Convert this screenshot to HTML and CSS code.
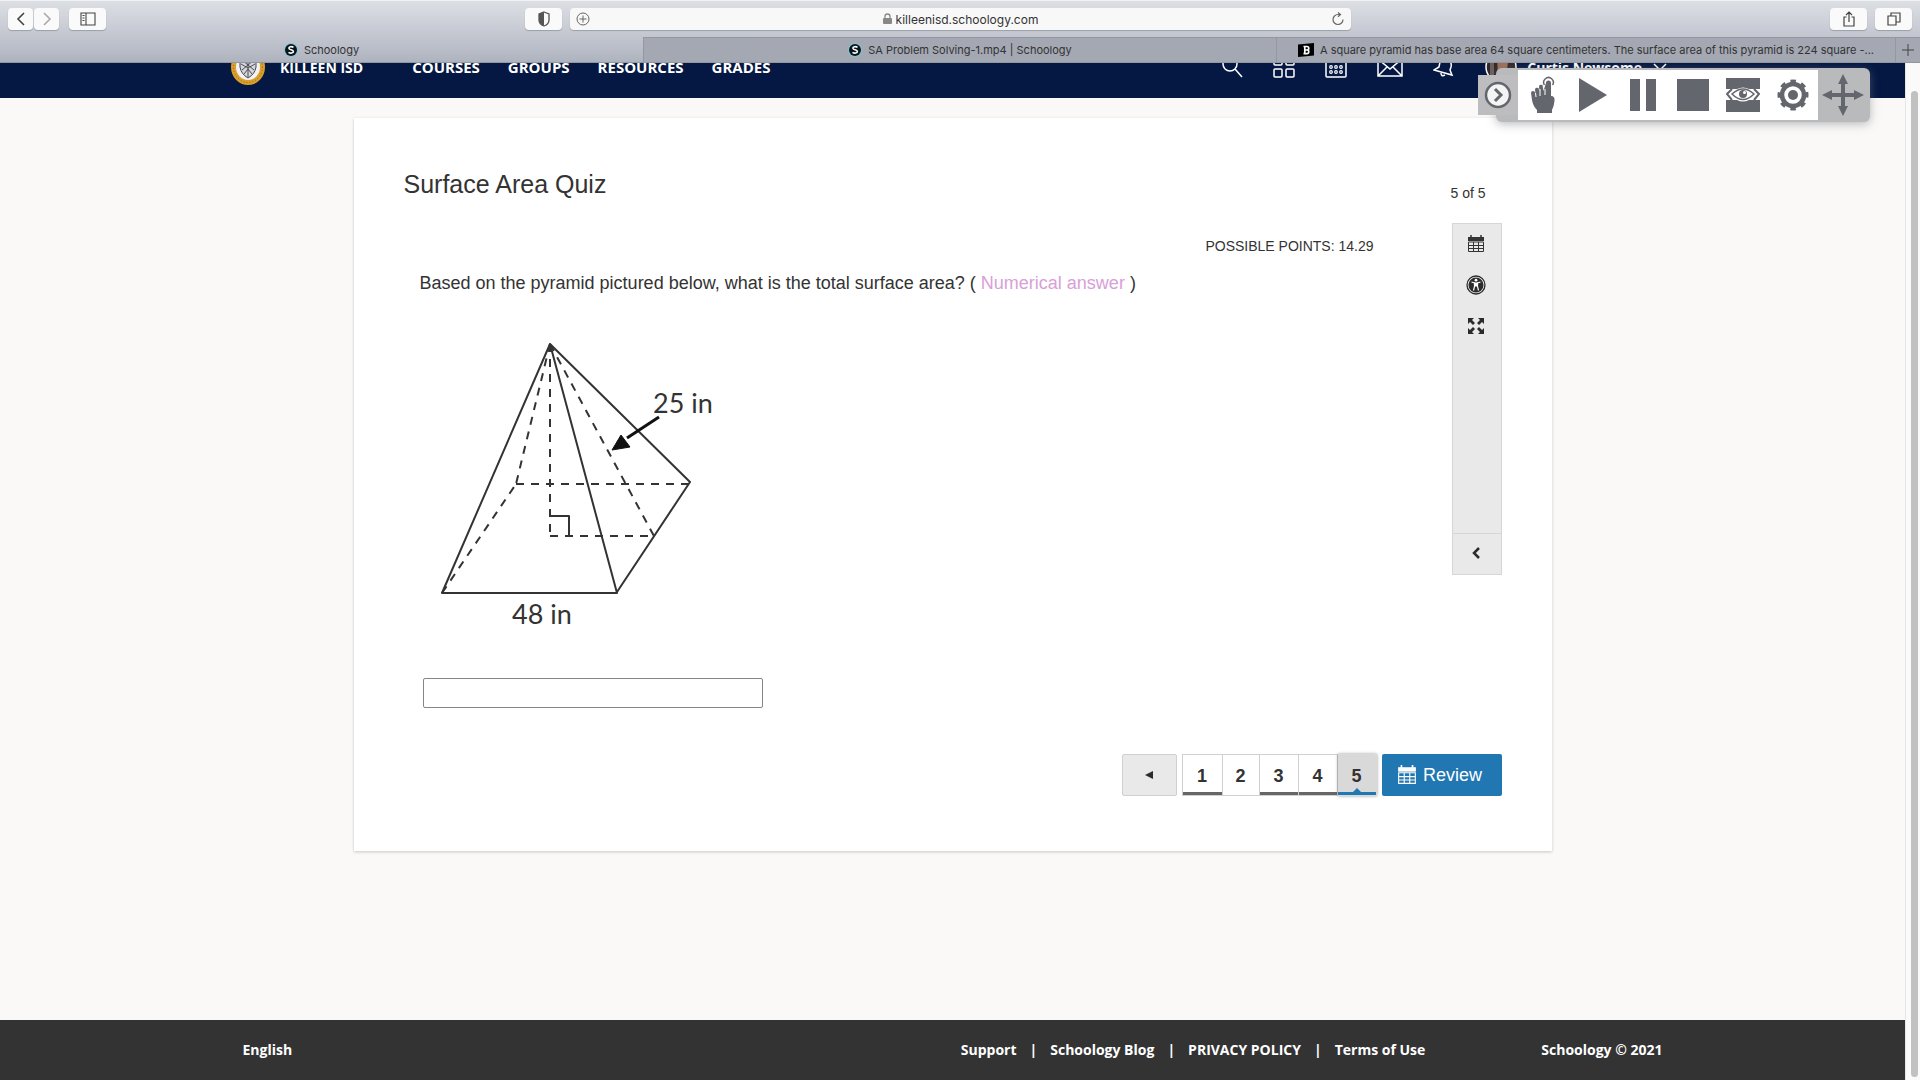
FILE: index.html
```html
<!DOCTYPE html>
<html lang="en">
<head>
    <meta charset="UTF-8">
    <meta name="viewport" content="width=device-width, initial-scale=1.0">
    <title>Surface Area Quiz | Schoology</title>
    <link rel="stylesheet" href="styles.css">
</head>
<body>

    <!-- Shared icons -->
    <svg class="icon-defs" width="0" height="0" aria-hidden="true">
        <symbol id="icon-calendar" viewBox="0 0 18 18">
            <path d="M1 2h16v4H1z" fill="currentColor"/>
            <path d="M4 0v4M14 0v4" stroke="currentColor" stroke-width="1.5"/>
            <path d="M1.5 7h15v9.5h-15zM1 10.5h16M1 13.5h16M6.5 7v10M11.5 7v10" fill="none" stroke="currentColor"/>
        </symbol>
        <symbol id="icon-schoology" viewBox="0 0 14 14">
            <circle cx="7" cy="7" r="7" fill="#7cc6dc"/>
            <circle cx="7" cy="7" r="6" fill="#0c1418"/>
            <path d="M9.5 4.3C7.6 3 4.8 3.6 4.9 5.2c.1 1.9 4.5 1.3 4.5 3.4 0 1.7-3 2-4.9.7" fill="none" stroke="#fff" stroke-width="1.6"/>
        </symbol>
    </svg>

    <div class="browser">
        <div class="toolbar">
            <div class="tool-group">
                <div class="history">
                    <button class="tool-btn small" aria-label="Back"><svg width="10" height="16" viewBox="0 0 10 16"><path d="M8 2L2 8l6 6" fill="none" stroke="#444" stroke-width="1.6"/></svg></button>
                    <button class="tool-btn small" aria-label="Forward"><svg width="10" height="16" viewBox="0 0 10 16"><path d="M2 2l6 6-6 6" fill="none" stroke="#aaa" stroke-width="1.6"/></svg></button>
                </div>
                <button class="tool-btn" aria-label="Sidebar"><svg width="16" height="14" viewBox="0 0 16 14"><path d="M1 1h14v12H1zM6 1v12M2.5 3.5h2M2.5 6h2M2.5 8.5h2" fill="none" stroke="#444" stroke-width="1.1"/></svg></button>
            </div>
            <div class="tool-group">
                <button class="tool-btn" aria-label="Privacy report"><svg width="14" height="16" viewBox="0 0 14 16"><path d="M7 1l5 2v6c0 3-2 5-5 6-3-1-5-3-5-6V3z" fill="none" stroke="#555" stroke-width="1.3"/><path d="M7 1v14c-3-1-5-3-5-6V3z" fill="#555"/></svg></button>
                <div class="address-bar">
                    <svg width="14" height="14" viewBox="0 0 14 14"><circle cx="7" cy="7" r="6" fill="none" stroke="#666"/><path d="M7 3.5v7M3.5 7h7" stroke="#666"/></svg>
                    <div class="address">
                        <svg width="9" height="12" viewBox="0 0 9 12"><rect x="0" y="5" width="9" height="6" rx="1" fill="#888"/><path d="M2 5V3.5a2.5 2.5 0 015 0V5" fill="none" stroke="#888" stroke-width="1.3"/></svg>
                        <input type="text" value="killeenisd.schoology.com" aria-label="Address">
                    </div>
                    <svg width="14" height="14" viewBox="0 0 14 14"><path d="M12 7.5A5 5 0 117 2.5h2M7 .5l2.500 2L7 4.8" fill="none" stroke="#666" stroke-width="1.2"/></svg>
                </div>
            </div>
            <div class="tool-group end">
                <button class="tool-btn" aria-label="Share"><svg width="14" height="16" viewBox="0 0 14 16"><path d="M4.5 6H2v9h10V6H9.5M7 11V1.5M4 4l3-3 3 3" fill="none" stroke="#444" stroke-width="1.2"/></svg></button>
                <button class="tool-btn" aria-label="Tabs"><svg width="14" height="14" viewBox="0 0 14 14"><path d="M1 4h8v9H1zM4 4V1h9v9H9" fill="none" stroke="#444" stroke-width="1.2"/></svg></button>
            </div>
        </div>
        <div class="tabs">
            <a href="#" class="tab active"><svg width="14" height="14"><use href="#icon-schoology"/></svg>Schoology</a>
            <a href="#" class="tab"><svg width="14" height="14"><use href="#icon-schoology"/></svg>SA Problem Solving-1.mp4 | Schoology</a>
            <a href="#" class="tab"><svg width="16" height="14" viewBox="0 0 16 14"><path d="M0 1.5L16 0v12.5L0 14z" fill="#000"/><path d="M5.5 3.5h3.5a1.7 1.7 0 010 3.5 1.8 1.8 0 010 3.6H5.5M6.8 3.5v7M6.8 7H9" fill="none" stroke="#fff" stroke-width="1.7"/></svg>A square pyramid has base area 64 square centimeters. The surface area of this pyramid is 224 square -...</a>
            <button class="new-tab" aria-label="New tab"><svg width="12" height="12" viewBox="0 0 12 12"><path d="M6 0v12M0 6h12" stroke="#444"/></svg></button>
        </div>
    </div>

    <div class="viewport">
        <div class="page">
            <header class="site-header">
                <nav class="site-nav">
                    <a href="#" class="brand">
                        <svg width="34" height="36" viewBox="0 0 34 36">
                            <ellipse cx="17" cy="18" rx="17" ry="18" fill="#d9a02c"/>
                            <ellipse cx="17" cy="18" rx="14.5" ry="15.5" fill="none" stroke="#8a661c" stroke-dasharray="1 2"/>
                            <ellipse cx="17" cy="18" rx="12" ry="13" fill="#f2f2f4"/>
                            <path d="M9 9q8-4 16 0v9q-1 7-8 11-7-4-8-11z" fill="#d5d6da" stroke="#454650"/>
                            <path d="M17 8v20M11 11l12 10M23 11L11 21M10 15l7 4 7-4M13 25l4-5 4 5" fill="none" stroke="#4c4d57"/>
                        </svg>
                        KILLEEN ISD
                    </a>
                    <div class="nav-links">
                        <a href="#">COURSES</a>
                        <a href="#">GROUPS</a>
                        <a href="#">RESOURCES</a>
                        <a href="#">GRADES</a>
                    </div>
                </nav>
                <div class="nav-tools">
                    <button aria-label="Search"><svg width="22" height="22" viewBox="0 0 22 22"><circle cx="9" cy="8" r="7"/><path d="M14 13l7 8"/></svg></button>
                    <button aria-label="Apps"><svg width="22" height="22" viewBox="0 0 22 22"><rect x="1" y="1" width="8" height="8" rx="1"/><rect x="13" y="1" width="8" height="8" rx="1"/><rect x="1" y="13" width="8" height="8" rx="1"/><rect x="13" y="13" width="8" height="8" rx="1"/></svg></button>
                    <button aria-label="Calendar"><svg width="22" height="22" viewBox="0 0 22 22"><rect x="1" y="1" width="20" height="20" rx="1"/><path d="M1 6h20"/><g stroke-width="1.2"><circle cx="6" cy="11" r="1.3"/><circle cx="11" cy="11" r="1.3"/><circle cx="16" cy="11" r="1.3"/><circle cx="6" cy="16" r="1.3"/><circle cx="11" cy="16" r="1.3"/><circle cx="16" cy="16" r="1.3"/></g></svg></button>
                    <button class="mail" aria-label="Messages"><svg width="26" height="20" viewBox="0 0 26 20"><path d="M1 1h24v18H1zM1 2l12 10L25 2M1 19l9-9M25 19l-9-9"/></svg><span class="badge"></span></button>
                    <button aria-label="Notifications"><svg width="22" height="22" viewBox="0 0 22 22"><path d="M8 3q4-2 8 1 3 3 2 7l-1 3 2 5L1 14l5-3 1-5zM8 17q0 4 4 2"/></svg></button>
                    <a href="#" class="user">
                        <svg width="32" height="32" viewBox="0 0 32 32"><circle cx="16" cy="16" r="15" fill="#33292a" stroke="#fff"/><path d="M12 6q8-3 11 5l-2 15h-8z" fill="#a0705c" stroke="none"/><path d="M7 24V12q3-8 11-8" fill="none" stroke="#6b625e" stroke-width="4"/></svg>
                        Curtis Newsome
                        <svg width="16" height="10" viewBox="0 0 16 10"><path d="M2 2l6 6 6-6"/></svg>
                    </a>
                </div>
            </header>

            <main class="quiz-card">
                <div class="quiz-head">
                    <h1>Surface Area Quiz</h1>
                    <span class="progress">5 of 5</span>
                </div>

                <div class="quiz-body">
                    <div class="question">
                        <p class="points">POSSIBLE POINTS: 14.29</p>
                        <label for="answer">Based on the pyramid pictured below, what is the total surface area? ( <span class="hint">Numerical answer</span> )</label>
                        <!-- Pyramid diagram -->
                        <svg class="pyramid" width="300" height="300" viewBox="0 0 300 300" role="img" aria-label="Square pyramid">
                            <g fill="none" stroke="#333" stroke-width="2" stroke-linejoin="round">
                                <path d="M130 8L22 257h175L130 8l140 138-73 110"/>
                                <g stroke-dasharray="8 7">
                                    <path d="M130 8L96 148"/>
                                    <path d="M22 257L96 148"/>
                                    <path d="M96 148h174"/>
                                    <path d="M130 8v192"/>
                                    <path d="M130 200h104"/>
                                    <path d="M130 8l104 192"/>
                                </g>
                                <path d="M130 180h19v20"/>
                                <path d="M239 81l-32 21" stroke="#111" stroke-width="3"/>
                            </g>
                            <path d="M192 114l9-15 9 12z" fill="#111" stroke="#111" stroke-linejoin="round"/>
                            <text x="233" y="77">25 in</text>
                            <text x="92" y="288">48 in</text>
                        </svg>
                        <input type="text" id="answer" class="answer">
                    </div>

                    <aside class="side-panel">
                        <button aria-label="Review"><svg width="18" height="18"><use href="#icon-calendar"/></svg></button>
                        <button aria-label="Accessibility"><svg width="20" height="20" viewBox="0 0 20 20"><circle cx="10" cy="10" r="9" fill="#e9e9e9" stroke="#2b2b2b" stroke-width="1.3"/><circle cx="10" cy="10" r="7.5" fill="#2b2b2b"/><circle cx="10" cy="5.2" r="1.4" fill="#fff"/><path d="M5.5 7l3 1v3.5L7.5 15.5M14.5 7l-3 1v3.5l1 4" fill="none" stroke="#fff" stroke-width="1.2"/><path d="M8 7.5h4v4H8z" fill="#fff"/></svg></button>
                        <button aria-label="Full screen"><svg width="18" height="18" viewBox="0 0 18 18"><path d="M1 1h6L5 3l3 3-2 2-3-3-2 2zM17 1v6l-2-2-3 3-2-2 3-3-2-2zM1 17v-6l2 2 3-3 2 2-3 3 2 2zM17 17h-6l2-2-3-3 2-2 3 3 2-2z" fill="#2b2b2b"/></svg></button>
                        <button class="collapse" aria-label="Collapse"><svg width="10" height="12" viewBox="0 0 10 12"><path d="M8 1L3 6l5 5" fill="none" stroke="#2b2b2b" stroke-width="2.5"/></svg></button>
                    </aside>
                </div>

                <div class="pager">
                    <button class="prev" aria-label="Previous"><svg width="8" height="8" viewBox="0 0 8 8"><path d="M8 0v8L0 4z" fill="#2b2b2b"/></svg></button>
                    <div class="numbers">
                        <button class="answered">1</button>
                        <button>2</button>
                        <button class="answered">3</button>
                        <button class="answered">4</button>
                        <button class="current">5</button>
                    </div>
                    <button class="review"><svg width="20" height="20"><use href="#icon-calendar"/></svg>Review</button>
                </div>
            </main>

            <footer class="site-footer">
                <div class="footer-inner">
                    <a href="#">English</a>
                    <div class="footer-links">
                        <a href="#">Support</a><span>|</span><a href="#">Schoology Blog</a><span>|</span><a href="#">PRIVACY POLICY</a><span>|</span><a href="#">Terms of Use</a>
                    </div>
                    <span>Schoology © 2021</span>
                </div>
            </footer>
        </div>
        <div class="scrollbar"><div class="thumb"></div></div>
    </div>

    <!-- Floating recorder controls -->
    <div class="recorder">
        <button class="rec-toggle" aria-label="Hide controls"><svg width="28" height="28" viewBox="0 0 28 28"><circle cx="14" cy="14" r="12" fill="#f4f4f5" stroke="#64666e" stroke-width="2.5"/><path d="M11 8l6 6-6 6" fill="none" stroke="#64666e" stroke-width="3"/></svg></button>
        <div class="rec-buttons">
            <button aria-label="Pointer"><svg width="26" height="38" viewBox="0 0 26 38"><path d="M14.500 9a4.800 4.800 0 118 0" fill="none" stroke="#64666e" stroke-width="1.5"/><path d="M16 7a2.500 2.500 0 015 0v13q4 0 3.500 5t-2.500 9v3H7v-3q-4-4-5-10l-1-7q0-2 2-2t2.500 3l-.5-5q1-2 3.500-1l1 4-.5-6q1-2 3.500-1l1 6z" fill="#64666e"/><path d="M5.500 17l.5 4M10 13v7M15 13v6" stroke="#fff"/></svg></button>
            <button aria-label="Play"><svg width="30" height="34" viewBox="0 0 30 34"><path d="M1 0v34l28-17z" fill="#64666e"/></svg></button>
            <button aria-label="Pause"><svg width="26" height="32" viewBox="0 0 26 32"><path d="M0 0h10v32H0zM16 0h10v32H16z" fill="#64666e"/></svg></button>
            <button aria-label="Stop"><svg width="32" height="32" viewBox="0 0 32 32"><path d="M0 0h32v32H0z" fill="#64666e"/></svg></button>
            <button aria-label="Spotlight"><svg width="34" height="34" viewBox="0 0 34 34"><path d="M0 0h34v11H23q-6-3-12 0H0zM0 34h34V22H23q-6 3-12 0H0z" fill="#64666e"/><path d="M6 11l-5 5 5 6M28 11l5 5-5 6" fill="none" stroke="#64666e" stroke-width="2"/><path d="M6 16q11-10 22 0-11 11-22 0z" fill="none" stroke="#64666e" stroke-width="1.5"/><circle cx="17" cy="16" r="4" fill="#64666e"/><circle cx="18.500" cy="14.500" r="1.500" fill="#fff"/></svg></button>
            <button aria-label="Settings"><svg width="32" height="32" viewBox="0 0 32 32"><circle cx="16" cy="16" r="13" fill="none" stroke="#64666e" stroke-width="5" stroke-dasharray="5 5.21" transform="rotate(-12 16 16)"/><circle cx="16" cy="16" r="11" fill="none" stroke="#64666e" stroke-width="4.500"/><circle cx="16" cy="16" r="5" fill="#64666e"/></svg></button>
        </div>
        <button class="rec-move" aria-label="Move"><svg width="42" height="42" viewBox="0 0 42 42"><path d="M21 0l5 10h-3v9h9v-3l10 5-10 5v-3h-9v9h3l-5 10-5-10h3v-9h-9v3L0 21l10-5v3h9v-9h-3z" fill="#64666e"/></svg></button>
    </div>

</body>
</html>
```
FILE: styles.css
```css
* { margin: 0; padding: 0; box-sizing: border-box; }
body {
    height: 100vh;
    display: flex;
    flex-direction: column;
    overflow: hidden;
    background: #faf9f7;
    color: #333;
    font-family: 'Liberation Sans', Arial, sans-serif;
}
a {
    color: inherit;
    text-decoration: none;
}
button, input {
    font: inherit;
    color: inherit;
    border: none;
    background: none;
}
button {
    display: flex;
    align-items: center;
    justify-content: center;
    cursor: pointer;
}
svg {
    flex: none;
}
.icon-defs {
    position: absolute;
}

/* Browser bar */
.browser {
    position: relative;
    z-index: 2;
    background: linear-gradient(#dcdfe4, #c6c9d2 50%, #adb3be);
    border-top: 1px solid #f2f2f2;
    font-family: Inter, sans-serif;
    color: #333;
}
.toolbar {
    display: grid;
    grid-template-columns: 517fr 826fr 561fr;
    height: 36px;
    padding: 7px 8px 0;
}
.tool-group {
    display: flex;
    gap: 8px;
    align-items: flex-start;
}
.tool-group.end {
    justify-content: flex-end;
}
.history {
    display: flex;
    gap: 1px;
    margin-right: 2px;
}
.tool-btn {
    width: 37px;
    height: 22px;
    border-radius: 4px;
    background: #fafafb;
    box-shadow: 0 1px 1px #999ea8;
}
.tool-btn.small {
    width: 25px;
}
.address-bar {
    flex: 1;
    display: flex;
    align-items: center;
    justify-content: space-between;
    height: 22px;
    padding: 0 6px;
    border-radius: 4px;
    background: #f8f8f8;
    box-shadow: 0 1px 1px #999ea8;
}
.address {
    display: flex;
    align-items: center;
    gap: 4px;
}
.address input {
    field-sizing: content;
    font-size: 12px;
}
.tabs {
    display: grid;
    grid-template-columns: 643fr 633fr 619fr 25px;
    height: 26px;
}
.tab, .new-tab {
    display: flex;
    align-items: center;
    justify-content: center;
    gap: 6px;
    font-size: 11px;
    white-space: nowrap;
    background: #a3a8b2;
    border-top: 1px solid #9297a0;
    border-left: 1px solid #9297a0;
    border-bottom: 1px solid #9297a0;
}
.tab.active {
    background: none;
    border-top-color: transparent;
    border-left: none;
}

/* Page */
.viewport {
    flex: 1;
    display: flex;
    min-height: 0;
}
.page {
    flex: 1;
    display: flex;
    flex-direction: column;
    overflow: hidden;
}
.site-header {
    display: flex;
    align-items: center;
    justify-content: space-between;
    height: 60px;
    flex: none;
    margin-top: -25px;
    padding: 0 237px 2px 231px;
    background: #051843;
    color: #fff;
    font-family: 'Open Sans', sans-serif;
    font-size: 15px;
    font-weight: 700;
}
.site-nav, .brand, .nav-links, .nav-tools, .user {
    display: flex;
    align-items: center;
}
.site-nav {
    gap: 49px;
}
.brand {
    gap: 15px;
    font-size: 14px;
}
.nav-links {
    gap: 28px;
}
.nav-tools {
    gap: 30px;
}
.nav-tools svg {
    fill: none;
    stroke: #fff;
    stroke-width: 1.5;
}
.mail {
    position: relative;
}
.badge {
    position: absolute;
    top: -12px;
    right: -14px;
    width: 16px;
    height: 16px;
    border-radius: 8px;
    background: #f4cf2e;
}
.user {
    gap: 10px;
    font-size: 14px;
}

/* Quiz */
.quiz-card {
    width: calc(100% - 40px);
    max-width: 1198px;
    margin: 20px auto 0;
    padding: 51px 50px 55px;
    background: #fff;
    box-shadow: 0 1px 3px rgba(0, 0, 0, 0.2);
}
.quiz-head {
    display: flex;
    justify-content: space-between;
    align-items: flex-end;
    height: 32px;
    padding-right: 16px;
}
h1 {
    align-self: flex-start;
    font-size: 25px;
    line-height: 30px;
    font-weight: normal;
}
.progress, .points {
    font-size: 14px;
    line-height: 16px;
}
.quiz-body {
    display: flex;
    align-items: flex-start;
    margin-top: 22px;
}
.question {
    flex: 1;
    display: flex;
    flex-direction: column;
    padding: 15px 78px 0 16px;
}
.points {
    text-align: right;
}
label {
    margin-top: 17px;
    font-size: 18px;
    line-height: 24px;
}
.hint {
    color: #d8a0d8;
}
.pyramid {
    margin-top: 41px;
}
.pyramid text {
    font-family: Lato, sans-serif;
    font-size: 27px;
    fill: #333;
}
.answer {
    width: 340px;
    height: 30px;
    margin: 42px 0 0 3px;
    padding: 0 6px;
    border: 1px solid #858585;
    border-radius: 2px;
}
.side-panel {
    display: flex;
    flex-direction: column;
    width: 50px;
    height: 352px;
    background: #e9e9e9;
    border: 1px solid #d6d6d6;
}
.side-panel button {
    height: 41px;
    padding: 0 2px 2px 0;
}
.side-panel button.collapse {
    margin-top: auto;
    border-top: 1px solid #d6d6d6;
}
.pager {
    display: flex;
    justify-content: flex-end;
    gap: 5px;
    margin-top: 46px;
    font-size: 18px;
}
.pager button {
    height: 42px;
}
.pager .prev {
    width: 55px;
    background: #e9e9e9;
    border: 1px solid #d0d0d0;
    border-radius: 2px;
}
.numbers {
    display: grid;
    grid-template-columns: 41px 37px repeat(3, 39px);
    font-weight: bold;
}
.numbers button {
    padding-top: 2px;
    border: 1px solid #d0d0d0;
    border-left-width: 0;
}
.numbers button:first-child {
    border-left-width: 1px;
}
.numbers .answered {
    box-shadow: inset 0 -3px #666;
}
.numbers .current {
    position: relative;
    background: #d9d9d9;
    border-color: #d9d9d9;
    box-shadow: inset 0 -3px #2077b2, 0 0 3px rgba(0, 0, 0, 0.4);
}
.numbers .current::after {
    content: "";
    position: absolute;
    bottom: 2px;
    border: 5px solid transparent;
    border-top-width: 0;
    border-bottom-color: #2077b2;
}
.pager .review {
    width: 120px;
    padding-right: 4px;
    gap: 6px;
    background: #2077b2;
    color: #fff;
    border-radius: 2px;
}

/* Footer */
.site-footer {
    margin-top: auto;
    background: #333;
    color: #fff;
    font-family: 'Open Sans', sans-serif;
    font-size: 14px;
    font-weight: 700;
}
.footer-inner {
    display: flex;
    align-items: center;
    max-width: 1420px;
    height: 60px;
    margin: 0 auto;
    padding-bottom: 2px;
}
.footer-links {
    display: flex;
    gap: 13px;
    margin-left: auto;
    margin-right: 116px;
}
.scrollbar {
    width: 15px;
    padding: 28px 2px 3px 5px;
    background: #fafafa;
    border-left: 1px solid #e6e6e6;
}
.thumb {
    height: 100%;
    border-radius: 4px;
    background: #c1c1c1;
}

/* Recorder */
.recorder {
    position: absolute;
    top: 68px;
    right: 50px;
    z-index: 3;
    display: flex;
    align-items: center;
    height: 54px;
}
.recorder::before {
    content: "";
    position: absolute;
    inset: 0 0 0 18px;
    z-index: -1;
    background: #b9babc;
    border-radius: 6px;
    box-shadow: 0 2px 10px rgba(120, 120, 130, 0.5);
}
.rec-toggle {
    width: 40px;
    height: 40px;
    background: #bdbdbf;
}
.rec-buttons {
    display: grid;
    grid-template-columns: repeat(6, 50px);
    height: 50px;
    background: #fff;
}
.rec-move {
    width: 52px;
    height: 50px;
    padding-right: 2px;
}
```
